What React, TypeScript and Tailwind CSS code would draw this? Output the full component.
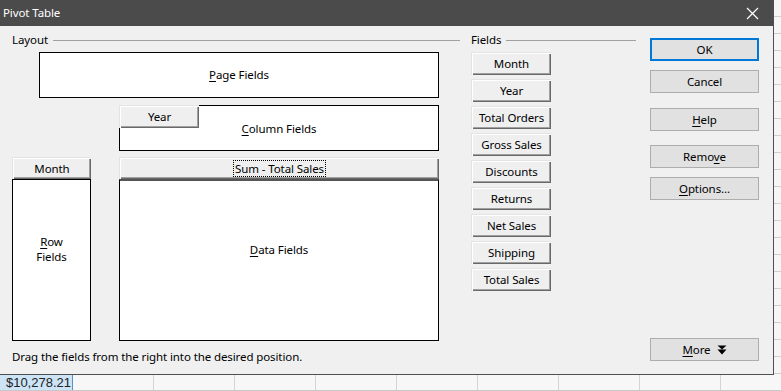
import React from "react";

const bevel =
    "bg-[#efefef] shadow-[inset_1px_1px_#ffffff,inset_-1px_-1px_#696969,inset_-2px_-2px_#a0a0a0] border-t border-l border-[#e3e3e3]";

const fields = ["Month", "Year", "Total Orders", "Gross Sales", "Discounts", "Returns", "Net Sales", "Shipping", "Total Sales"];

const FieldButton = ({ label, className = "" }: { label: React.ReactNode; className?: string }) => (
    <div className={`flex items-center justify-center ${bevel} ${className}`}>{label}</div>
);

const DialogButton = ({ children, primary, className = "" }: { children: React.ReactNode; primary?: boolean; className?: string }) => (
    <div
        className={`h-[23px] w-[109px] flex items-center justify-center bg-[#e1e1e1] ${
            primary ? "border-2 border-[#0078d7]" : "border border-[#adadad]"
        } ${className}`}
    >
        {children}
    </div>
);

const GroupHeader = ({ title, className = "" }: { title: string; className?: string }) => (
    <div className={`flex items-center h-[16px] ${className}`}>
        <span className="pr-[5px]">{title}</span>
        <div className="flex-1 border-t border-[#a0a0a0]" />
    </div>
);

const Key = ({ children }: { children: string }) => <u className="underline-offset-2">{children}</u>;

export default function App() {
    const stripRows = Array.from({ length: 23 });
    const cols = [73, 81, 81, 81, 81, 81, 81, 81, 81, 81];

    return (
        <div
            className="w-[781px] h-[391px] overflow-hidden flex flex-col bg-white text-[11.5px] tracking-[-0.1px] text-black"
            style={{ fontFamily: '"Segoe UI", "Noto Sans", sans-serif' }}
        >
            <div className="flex h-[375px]">
                {/* Dialog */}
                <div className="w-[774px] flex flex-col border-r border-b border-[#4f4f4f] bg-[#f0f0f0]">
                    <div className="h-[26px] bg-[#4b4b4b] flex items-center justify-between pl-[3px] pr-[14px] text-white">
                        <span>Pivot Table</span>
                        <svg width="13" height="13" viewBox="0 0 13 13" className="mt-[1px]">
                            <path d="M1 1 L12 12 M12 1 L1 12" stroke="#ffffff" strokeWidth="1.2" />
                        </svg>
                    </div>

                    <div className="flex flex-1">
                        {/* Layout */}
                        <div className="ml-[12px] w-[448px] flex flex-col">
                            <GroupHeader title="Layout" className="mt-[6px]" />

                            <div className="ml-[27px] mt-[4px] w-[400px] h-[46px] border border-black bg-white flex items-center justify-center">
                                <span><Key>P</Key>age Fields</span>
                            </div>

                            <div className="relative ml-[107px] mt-[7px] w-[320px] h-[46px] border border-black bg-white flex items-center justify-center">
                                <FieldButton label="Year" className="absolute -top-px -left-px w-[80px] h-[23px] pb-[1px]" />
                                <span className="mt-[2px]"><Key>C</Key>olumn Fields</span>
                            </div>

                            <div className="flex mt-[6px] h-[184px] gap-[28px]">
                                <div className="w-[79px] flex flex-col">
                                    <FieldButton label="Month" className="h-[22px]" />
                                    <div className="flex-1 border border-black bg-white flex flex-col items-center justify-center text-center">
                                        <div className="-mt-[22px] flex flex-col leading-[14px] gap-[1px]">
                                            <span><Key>R</Key>ow</span>
                                            <span>Fields</span>
                                        </div>
                                    </div>
                                </div>
                                <div className="w-[320px] flex flex-col">
                                    <FieldButton
                                        label={<span className="outline outline-1 outline-dotted outline-black px-[1px] leading-[15px]">Sum - Total Sales</span>}
                                        className="h-[22px]"
                                    />
                                    <div className="flex-1 border border-black border-t-2 border-t-[#555555] bg-white flex items-center justify-center">
                                        <span className="-mt-[22px]"><Key>D</Key>ata Fields</span>
                                    </div>
                                </div>
                            </div>

                            <div className="mt-[8px] h-[16px] flex items-center">Drag the fields from the right into the desired position.</div>
                        </div>

                        {/* Fields */}
                        <div className="ml-[11px] w-[165px] flex flex-col">
                            <GroupHeader title="Fields" className="mt-[6px]" />
                            <div className="mt-[4px] flex flex-col gap-[4px]">
                                {fields.map(f => (
                                    <FieldButton key={f} label={f} className="w-[80px] h-[23px]" />
                                ))}
                            </div>
                        </div>

                        {/* Buttons */}
                        <div className="ml-[14px] w-[109px] flex flex-col pt-[12px] pb-[13px]">
                            <DialogButton primary>OK</DialogButton>
                            <DialogButton className="mt-[9px]">Cancel</DialogButton>
                            <DialogButton className="mt-[15px]"><span><Key>H</Key>elp</span></DialogButton>
                            <DialogButton className="mt-[14px]"><span>Remo<Key>v</Key>e</span></DialogButton>
                            <DialogButton className="mt-[9px]"><span><Key>O</Key>ptions...</span></DialogButton>
                            <div className="flex-1" />
                            <DialogButton>
                                <span className="flex items-center gap-[6px]">
                                    <span><Key>M</Key>ore</span>
                                    <svg width="10" height="10" viewBox="0 0 10 10">
                                        <path d="M0.5 0.5 H9.5 L5 4.5 Z M0.5 4.5 H9.5 L5 9.5 Z" fill="#000000" />
                                    </svg>
                                </span>
                            </DialogButton>
                        </div>
                    </div>
                </div>

                {/* Spreadsheet behind, right edge */}
                <div className="flex-1 flex flex-col bg-[#f6f6f6]">
                    {stripRows.map((_, i) => (
                        <div key={i} className="h-[17px] shrink-0 border-b border-[#cfcfcf]" />
                    ))}
                </div>
            </div>

            {/* Spreadsheet row below */}
            <div className="h-[16px] flex bg-[#f7f7f7] border-b border-[#c8c8c8]">
                {cols.map((w, i) => (
                    <div
                        key={i}
                        style={{ width: w }}
                        className={
                            i === 0
                                ? "shrink-0 bg-[#cde4f7] border-r border-[#5a8fc7] flex items-center justify-end pr-[1px]"
                                : "shrink-0 border-r border-[#d4d4d4]"
                        }
                    >
                        {i === 0 && (
                            <span className="text-[13px] leading-[14px] tracking-normal text-[#222222]" style={{ fontFamily: '"Liberation Sans", Arial, sans-serif' }}>
                                $10,278.21
                            </span>
                        )}
                    </div>
                ))}
            </div>
        </div>
    );
}
